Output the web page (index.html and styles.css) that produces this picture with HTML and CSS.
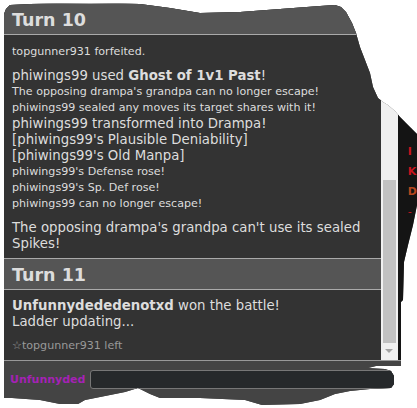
FILE: index.html
```html
<!DOCTYPE html>
<html lang="en">
<head>
  <meta charset="UTF-8" />
  <title>Battle log</title>
  <link rel="stylesheet" href="styles.css">
</head>
<body>
  <div class="snip">
    <div class="room">
      <div class="log">
        <h2 class="turn">Turn 10</h2>
        <div class="block first">
          <div class="s">topgunner931 forfeited.</div>
          <div class="b gap">phiwings99 used <strong>Ghost of 1v1 Past</strong>!</div>
          <div class="s">The opposing drampa's grandpa can no longer escape!</div>
          <div class="s">phiwings99 sealed any moves its target shares with it!</div>
          <div class="b">phiwings99 transformed into Drampa!</div>
          <div class="b">[phiwings99's Plausible Deniability]</div>
          <div class="b">[phiwings99's Old Manpa]</div>
          <div class="s">phiwings99's Defense rose!</div>
          <div class="s">phiwings99's Sp. Def rose!</div>
          <div class="s">phiwings99 can no longer escape!</div>
          <div class="b gap">The opposing drampa's grandpa can't use its sealed Spikes!</div>
        </div>
        <h2 class="turn">Turn 11</h2>
        <div class="block last">
          <div class="b"><strong>Unfunnydededenotxd</strong> won the battle!</div>
          <div class="b">Ladder updating...</div>
          <div class="s gap left">&#9734;topgunner931 left</div>
        </div>
      </div>
      <div class="scrollbar">
        <div class="thumb"></div>
        <div class="arrow"></div>
      </div>
      <div class="side">
        <div class="red">I</div>
        <div class="red">K</div>
        <div class="orange">D</div>
        <div class="red thin">-</div>
      </div>
    </div>
    <div class="chat">
      <span class="name">Unfunnyded</span>
      <textarea class="input"></textarea>
    </div>
  </div>
</body>
</html>
```

FILE: styles.css
```css
body {
  margin: 0;
  background-color: #fff;
  font-family: "DejaVu Sans", Verdana, sans-serif;
}
.snip {
  width: 417px;
  height: 408px;
  display: flex;
  flex-direction: column;
  background-color: #444;
  clip-path: polygon(4px 14px, 6px 9px, 10px 5px, 30px 4px, 90px 3px, 140px 4px, 170px 8px, 200px 13px, 240px 12px, 280px 9px, 320px 6px, 335px 5px, 341px 7px, 346px 12px, 352px 23px, 356px 33px, 360px 47px, 365px 60px, 370px 73px, 373px 87px, 378px 98px, 383px 102px, 388px 105px, 395px 111px, 400px 117px, 404px 121px, 411px 128px, 417px 134px, 417px 205px, 413px 225px, 408px 245px, 404px 262px, 403px 300px, 401px 302px, 401px 366px, 376px 366px, 368px 368px, 385px 369px, 391px 371px, 394px 376px, 394px 384px, 391px 388px, 370px 389px, 350px 391px, 335px 394px, 320px 400px, 300px 404px, 262px 405px, 245px 400px, 200px 398px, 160px 398px, 150px 394px, 138px 388px, 125px 392px, 100px 397px, 85px 400px, 78px 404px, 60px 404px, 40px 400px, 12px 398px, 4px 398px);
}
.room {
  display: flex;
  height: 360px;
}
.log {
  width: 384px;
  padding-top: 3px;
  box-sizing: border-box;
  background-color: #333;
  color: #ddd;
  overflow: hidden;
}
.turn {
  margin: 0;
  padding: 6px 0 4px 12px;
  font-size: 17.5px;
  line-height: 20px;
  color: #ddd;
  background-color: #555;
  border-top: 1px solid #aaa;
  border-bottom: 1px solid #aaa;
}
.block {
  padding: 9px 8px 6px 12px;
}
.block.last {
  padding-top: 8px;
}
.s {
  font-size: 11.1px;
  line-height: 16px;
}
.b {
  font-size: 13.3px;
  line-height: 16px;
}
.gap {
  margin-top: 8px;
}
.left {
  color: #999;
}
.scrollbar {
  width: 17px;
  padding: 180px 2px 0;
  box-sizing: border-box;
  background-color: #f0f0f0;
  display: flex;
  flex-direction: column;
  align-items: center;
}
.thumb {
  width: 100%;
  height: 163px;
  background-color: #c1c1c1;
}
.arrow {
  margin-top: 6px;
  width: 0;
  height: 0;
  border-left: 4px solid transparent;
  border-right: 4px solid transparent;
  border-top: 4px solid #a3a3a3;
}
.side {
  flex: 1;
  padding: 142px 0 0 10px;
  background-color: #141414;
  font-size: 11px;
  font-weight: bold;
  line-height: 20px;
}
.red {
  color: #c8141e;
}
.orange {
  color: #b5461f;
}
.thin {
  font-weight: normal;
}
.chat {
  height: 48px;
  box-sizing: border-box;
  border-top: 1px solid #999;
  padding: 9px 0 0 10px;
  display: flex;
  align-items: flex-start;
  background-color: #444;
}
.name {
  font-size: 11px;
  font-weight: bold;
  line-height: 19px;
  color: #a422b4;
}
.input {
  margin: 0 0 0 5px;
  width: 310px;
  height: 19px;
  box-sizing: border-box;
  padding: 0;
  border: 1px solid #777;
  border-radius: 3px;
  background-color: #26292b;
  resize: none;
  outline: none;
}
```
